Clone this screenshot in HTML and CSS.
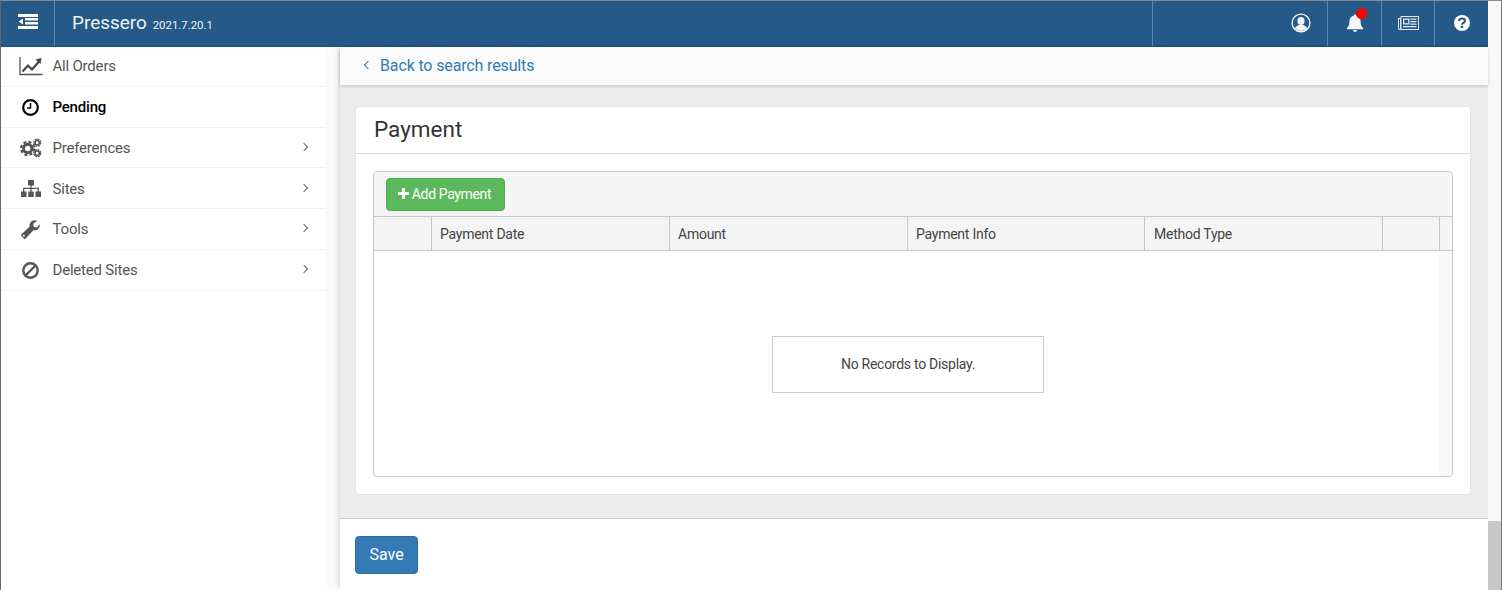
FILE: index.html
```html
<!DOCTYPE html>
<html lang="en">
<head>
<meta charset="utf-8">
<title>Pressero</title>
<link rel="stylesheet" href="styles.css">
</head>
<body>
<div class="page">
  <div class="app">
    <header class="topbar">
      <button class="menu-toggle" aria-label="Menu">
        <svg width="20" height="15" viewBox="0 0 20 15"><path fill="#fff" d="M0 0h20v3H0zM7 4h13v2.500H7zM7 8h13v2.500H7zM0 12h20v3H0zM5 4.500v6L0.500 7.500z"/></svg>
      </button>
      <div class="brand"><span class="brand-name">Pressero</span><span class="brand-version">2021.7.20.1</span></div>
      <div class="top-actions">
        <div class="top-cell cell-user">
          <svg width="20" height="20" viewBox="0 0 20 20"><defs><clipPath id="uc"><circle cx="10" cy="10" r="8"/></clipPath></defs><circle cx="10" cy="10" r="8.900" fill="none" stroke="#fff" stroke-width="1.300"/><g clip-path="url(#uc)" fill="#eef2f6"><ellipse cx="10" cy="8" rx="3.600" ry="4"/><path d="M3 19c0-5 3-7 7-7s7 2 7 7z"/></g></svg>
        </div>
        <div class="top-cell cell-bell">
          <svg width="20" height="20" viewBox="0 0 20 20"><path fill="#f4f6f8" d="M10 1.500c.8 0 1.300.5 1.300 1.200 3 .6 4.300 2.900 4.300 5.800 0 3.600 1 5.300 2.600 6.700v1H1.800v-1c1.600-1.400 2.600-3.100 2.600-6.700 0-2.900 1.300-5.200 4.300-5.800 0-.7.500-1.200 1.300-1.200zM8 17h4c0 1.200-.9 2-2 2s-2-.8-2-2z"/></svg>
          <span class="badge"></span>
        </div>
        <div class="top-cell cell-news">
          <svg width="21" height="14" viewBox="0 0 21 14"><path fill="#dfe6ee" fill-rule="evenodd" d="M2.500 0H21v14H1.500C.6 14 0 13.300 0 12.500V2h2.500zM1 3v9.500c0 .3.200.5.500.5s.5-.2.500-.5V3zM3.500 1v11.500c0 .2 0 .4-.1.500H20V1z"/><path fill="#dfe6ee" d="M5 2.500h6.500v6H5zM12.500 2.500h6v1.300h-6zM12.500 5h6v1.300h-6zM12.500 7.500h6v1.300h-6zM5 10h13.500v1.300H5z"/><path fill="#255a88" d="M6.300 3.800h3.900v3.400H6.300z"/></svg>
        </div>
        <div class="top-cell cell-help">
          <svg width="16" height="16" viewBox="0 0 16 16"><circle cx="8" cy="8" r="8" fill="#fff"/><path fill="none" stroke="#255a88" stroke-width="2.200" d="M5 6c0-1.700 1.300-2.500 3-2.500s3 .9 3 2.300c0 2-3 2-3 3.900"/><rect x="6.800" y="10.800" width="2.400" height="2.200" fill="#255a88"/></svg>
        </div>
      </div>
    </header>
    <div class="body">
      <nav class="sidebar">
        <a class="nav-item first"><span class="nav-icon"><svg width="24" height="19" viewBox="0 0 24 19"><path fill="none" stroke="#555" stroke-width="1.300" d="M1 0v17.500h22.500"/><path fill="none" stroke="#444" stroke-width="2.200" d="M3.500 14.500l5.500-6 4 4 7-8"/><path fill="#444" d="M16.500 2.500l6-1.500-1 6z"/></svg></span><span class="nav-label">All Orders</span></a>
        <a class="nav-item active"><span class="nav-icon"><svg width="17" height="17" viewBox="0 0 17 17"><circle cx="8.500" cy="8.500" r="7.300" fill="none" stroke="#000" stroke-width="2.200"/><path fill="none" stroke="#000" stroke-width="1.500" d="M8.500 4v5H5"/></svg></span><span class="nav-label">Pending</span></a>
        <a class="nav-item short"><span class="nav-icon"><svg width="22" height="20" viewBox="0 0 23 20"><circle cx="8" cy="10.500" r="4.400" fill="none" stroke="#555" stroke-width="3"/><circle cx="8" cy="10.500" r="6.800" fill="none" stroke="#555" stroke-width="2.400" stroke-dasharray="3.100 2.240"/><circle cx="18" cy="4.500" r="2.300" fill="none" stroke="#555" stroke-width="1.700"/><circle cx="18" cy="4.500" r="3.700" fill="none" stroke="#555" stroke-width="1.400" stroke-dasharray="1.900 1"/><circle cx="18" cy="15.500" r="2.300" fill="none" stroke="#555" stroke-width="1.700"/><circle cx="18" cy="15.500" r="3.700" fill="none" stroke="#555" stroke-width="1.400" stroke-dasharray="1.900 1"/></svg></span><span class="nav-label">Preferences</span><span class="chev"></span></a>
        <a class="nav-item nudge"><span class="nav-icon"><svg width="20" height="17" viewBox="0 0 20 17"><path fill="#555" d="M7 0h6v5.500H7zM0 11.500h5.500V17H0zM7.250 11.500h5.500V17h-5.500zM14.500 11.500H20V17h-5.500z"/><path fill="none" stroke="#555" stroke-width="1.300" d="M10 5v7M2.700 12V8.300h14.600V12"/></svg></span><span class="nav-label">Sites</span><span class="chev"></span></a>
        <a class="nav-item"><span class="nav-icon"><svg width="19" height="19" viewBox="0 0 19 19"><path fill="#555" d="M3 18.700L.3 16c-.4-.4-.4-1 0-1.400l8.400-8.100C8 3.500 10 .5 13.400.2c1-.1 2 .1 2.800.6l-4 3 .6 3 3 .8 3-3.400c.5 3.600-2.400 6.700-6.400 6.100L4.400 18.700c-.4.400-1 .4-1.400 0z"/><circle cx="2.800" cy="15.800" r="1" fill="#fff"/></svg></span><span class="nav-label">Tools</span><span class="chev"></span></a>
        <a class="nav-item"><span class="nav-icon"><svg width="17" height="17" viewBox="0 0 17 17"><circle cx="8.500" cy="8.500" r="7.200" fill="none" stroke="#555" stroke-width="2.400"/><path stroke="#555" stroke-width="2.400" d="M4 13L13 4"/></svg></span><span class="nav-label">Deleted Sites</span><span class="chev"></span></a>
      </nav>
      <div class="gutter"></div>
      <main class="main">
        <div class="backbar"><span class="back-chev"></span><a class="back-link">Back to search results</a></div>
        <div class="content">
          <section class="card">
            <h1 class="card-title">Payment</h1>
            <div class="card-body">
              <div class="grid">
                <div class="toolbar">
                  <button class="btn-add"><svg width="11" height="11" viewBox="0 0 11 11"><path fill="#fff" d="M4 0h3v4h4v3H7v4H4V7H0V4h4z"/></svg><span>Add Payment</span></button>
                </div>
                <div class="grid-head">
                  <div class="th"></div>
                  <div class="th">Payment Date</div>
                  <div class="th">Amount</div>
                  <div class="th">Payment Info</div>
                  <div class="th">Method Type</div>
                  <div class="th"></div>
                  <div class="th"></div>
                </div>
                <div class="grid-body">
                  <div class="grid-rows"><div class="no-records">No Records to Display.</div></div>
                  <div class="grid-scroll"></div>
                </div>
              </div>
            </div>
          </section>
        </div>
        <footer class="footer"><button class="btn-save">Save</button></footer>
      </main>
    </div>
  </div>
  <div class="scrollbar"><div class="thumb"></div></div>
</div>
</body>
</html>
```
FILE: styles.css
```css
* { box-sizing: border-box; }
html, body { margin: 0; height: 100%; overflow: hidden; }
body { font-family: Roboto, "Liberation Sans", sans-serif; font-size: 14px; color: #333; background: #fff; }
.page { display: flex; width: 1502px; height: 590px; border-top: 1px solid #8a8a8a; border-left: 1px solid #666; border-right: 1px solid #777; }
.app { width: 1487px; display: flex; flex-direction: column; }
.scrollbar { width: 13px; background: #f8f8f8; display: flex; flex-direction: column; justify-content: flex-end; }
.thumb { height: 69px; background: #c8c8c8; }

.topbar { height: 46px; flex: none; background: #255a88; display: flex; align-items: stretch; color: #fff; border-bottom: 1px solid #1f4e78; }
.menu-toggle { width: 54px; background: none; border: 0; padding: 0 0 5px; border-right: 1px solid #5f86a8; display: flex; align-items: center; justify-content: center; }
.brand { padding-left: 17px; display: flex; align-items: baseline; padding-top: 10px; gap: 6px; flex: 1; color: #eef2f6; }
.brand-name { font-size: 18.900px; }
.brand-version { font-size: 11.400px; }
.top-actions { display: flex; }
.top-cell { position: relative; display: flex; align-items: center; justify-content: center; border-left: 1px solid #5f86a8; padding-bottom: 2px; }
.cell-user { width: 175px; padding-left: 122px; }
.cell-bell { width: 54px; }
.cell-news { width: 53px; }
.cell-help { width: 54px; }
.badge { position: absolute; top: 7px; left: 28px; width: 11px; height: 11px; border-radius: 50%; background: #f00; }

.body { flex: 1; display: flex; min-height: 0; }
.sidebar { width: 325px; background: #fff; flex: none; }
.gutter { width: 14px; flex: none; background: #fafafa; }
.nav-item { display: flex; align-items: center; height: 41px; border-bottom: 1px solid #f0f0f0; color: #555; padding-left: 17px; font-size: 15px; letter-spacing: -.2px; position: relative; }
.nav-item.first { height: 40px; padding-bottom: 1px; }
.nav-item.short { height: 40px; }
.nav-item.nudge { padding-top: 1px; }
.nav-item.active { color: #000; font-weight: 500; }
.nav-icon { width: 34.500px; display: flex; justify-content: center; flex: none; padding-right: 9px; }
.nav-label { flex: 1; }
.chev { width: 6px; height: 6px; border-top: 1.300px solid #666; border-right: 1.300px solid #666; transform: rotate(45deg); margin-right: 19px; margin-bottom: 2px; }

.main { flex: 1; display: flex; flex-direction: column; min-width: 0; box-shadow: -3px 0 5px -2px rgba(0,0,0,.18); }
.backbar { height: 38px; flex: none; background: #fafafa; display: flex; align-items: center; padding-left: 25px; padding-bottom: 2px; font-size: 16px; letter-spacing: -.14px; box-shadow: 0 1px 3px rgba(0,0,0,.2); position: relative; }
.back-chev { width: 6px; height: 6px; border-left: 1.300px solid #337ab7; border-bottom: 1.300px solid #337ab7; transform: rotate(45deg); margin-right: 9px; }
.back-link { color: #337ab7; }
.content { flex: 1; background: #ececec; padding: 21px 17px 23px 15px; min-height: 0; display: flex; }
.card { flex: 1; background: #fff; border-radius: 4px; border: 1px solid #e4e4e4; display: flex; flex-direction: column; }
.card-title { margin: 0; height: 47px; flex: none; padding: 0 18px; font-size: 22.500px; font-weight: 400; line-height: 44px; color: #333; border-bottom: 1px solid #ddd; }
.card-body { flex: 1; padding: 17px; display: flex; min-height: 0; }
.grid { flex: 1; border: 1px solid #c8c8c8; border-radius: 4px; display: flex; flex-direction: column; overflow: hidden; }
.toolbar { height: 45px; flex: none; background: #f4f4f4; padding: 6px 12px; border-bottom: 1px solid #c8c8c8; }
.btn-add { height: 33px; width: 119px; display: flex; align-items: center; justify-content: center; gap: 3px; background: #5cb85c; border: 1px solid #4cae4c; border-radius: 4px; color: #fff; font: 14px Roboto, sans-serif; letter-spacing: -.36px; padding: 0 2px 2px 0; }
.grid-head { height: 34px; flex: none; display: grid; grid-template-columns: 58px 238px 238px 237px 238px 57px 1fr; background: #f4f4f4; border-bottom: 1px solid #c8c8c8; }
.th { border-right: 1px solid #c8c8c8; padding-left: 8px; line-height: 34px; font-size: 14px; letter-spacing: -.25px; color: #444; }
.th:nth-child(5) { padding-left: 9px; }
.th:last-child { border-right: 0; }
.grid-body { flex: 1; display: flex; min-height: 0; }
.grid-rows { flex: 1; display: flex; align-items: center; justify-content: center; padding-left: 3px; padding-top: 2px; }
.grid-scroll { width: 13px; flex: none; background: #f9f9f9; }
.no-records { width: 272px; height: 57px; border: 1px solid #ccc; background: #fff; display: flex; align-items: center; justify-content: center; color: #444; font-size: 14px; letter-spacing: -.27px; padding-bottom: 1px; }
.footer { height: 72px; flex: none; background: #fff; border-top: 1px solid #c8c8c8; padding: 17px 15px; }
.btn-save { width: 63px; height: 38px; background: #337ab7; border: 1px solid #2e6da4; border-radius: 4px; color: #fff; font: 16px Roboto, sans-serif; padding: 0 0 1px; }
```
